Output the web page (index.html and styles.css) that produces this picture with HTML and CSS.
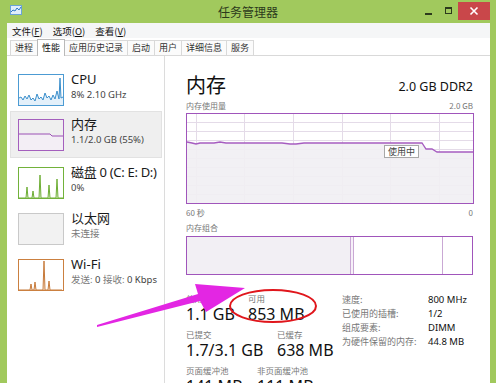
FILE: index.html
```html
<!DOCTYPE html>
<html lang="zh-CN">
<head>
<meta charset="utf-8">
<title>任务管理器</title>
<link rel="stylesheet" href="styles.css">
</head>
<body>
<div class="window">
  <div class="titlebar">
    <div class="tb-left">
      <svg class="app-icon" width="12" height="10" viewBox="0 0 12 10"><rect x="0.5" y="0.5" width="11" height="9" fill="#dfeefa" stroke="#6aa3d6"/><polyline points="1,7 3,5 5,6 7,3 9,5 11,2" fill="none" stroke="#2f78c4" stroke-width="1"/></svg>
    </div>
    <div class="title">任务管理器</div>
    <div class="tb-right">
      <svg class="caption-svg" width="72" height="18" viewBox="0 0 72 18">
        <rect x="7" y="11" width="7" height="2" fill="#2c3a1c"/>
        <rect x="27.5" y="5.5" width="6" height="6" fill="none" stroke="#2c3a1c"/>
        <rect x="27" y="5" width="7" height="2" fill="#2c3a1c"/>
        <rect x="40" y="0" width="32" height="18" fill="#c9474a"/>
        <path d="M52.5 5.5 L59.5 12.5 M59.5 5.5 L52.5 12.5" stroke="#ffffff" stroke-width="1.6"/>
      </svg>
    </div>
  </div>
  <div class="client">
    <div class="menubar">
      <span class="menu">文件(<u>F</u>)</span>
      <span class="menu">选项(<u>O</u>)</span>
      <span class="menu">查看(<u>V</u>)</span>
    </div>
    <div class="tabs">
      <span class="tab">进程</span>
      <span class="tab active">性能</span>
      <span class="tab">应用历史记录</span>
      <span class="tab">启动</span>
      <span class="tab">用户</span>
      <span class="tab">详细信息</span>
      <span class="tab">服务</span>
    </div>
    <div class="main">
      <div class="sidebar">
        <div class="item">
          <svg class="thumb" width="46" height="32" viewBox="0 0 46 32"><polygon points="1,31 1,24 3,23 5,26 7,22 9,25 11,21 13,26 15,24 17,27 19,20 21,25 23,23 25,26 27,19 29,24 31,22 33,26 35,21 37,25 39,17 41,25 42,4 43,24 45,23 45,31" fill="#e3f0fa"/><polyline points="1,24 3,23 5,26 7,22 9,25 11,21 13,26 15,24 17,27 19,20 21,25 23,23 25,26 27,19 29,24 31,22 33,26 35,21 37,25 39,17 41,25 42,4 43,24 45,23" fill="none" stroke="#3b8fcc" stroke-width="1"/><rect x="0.5" y="0.5" width="45" height="31" fill="none" stroke="#4c9bd3"/></svg>
          <div class="info"><div class="name">CPU</div><div class="sub">8% 2.10 GHz</div></div>
        </div>
        <div class="item selected">
          <svg class="thumb" width="46" height="32" viewBox="0 0 46 32"><polygon points="1,31 1,15 32,15 34,17 45,17 45,31" fill="#f3eef5"/><polyline points="1,15 32,15 34,17 45,17" fill="none" stroke="#9b50b5" stroke-width="1"/><rect x="0.5" y="0.5" width="45" height="31" fill="none" stroke="#a45fbd"/></svg>
          <div class="info"><div class="name">内存</div><div class="sub">1.1/2.0 GB (55%)</div></div>
        </div>
        <div class="item">
          <svg class="thumb" width="46" height="32" viewBox="0 0 46 32"><polyline points="1,31 8,31 9,20 10,31 14,31 15,24 16,31 21,31 22,8 23,31 30,31 31,18 32,31 38,31 39,12 40,31 45,31" fill="#e9f4de" stroke="#6eae35" stroke-width="1"/><rect x="0.5" y="0.5" width="45" height="31" fill="none" stroke="#72b23a"/></svg>
          <div class="info"><div class="name tight">磁盘 0 (C: E: D:)</div><div class="sub">0%</div></div>
        </div>
        <div class="item">
          <svg class="thumb" width="46" height="32" viewBox="0 0 46 32"><rect x="0.5" y="0.5" width="45" height="31" fill="#f2f2f2" stroke="#c9c9c9"/></svg>
          <div class="info"><div class="name">以太网</div><div class="sub muted">未连接</div></div>
        </div>
        <div class="item">
          <svg class="thumb" width="46" height="32" viewBox="0 0 46 32"><polyline points="1,31 12,31 13,25 14,31 16,31 17,23 18,31 25,31 26,2 27,31 30,31 31,22 32,31 44,31" fill="#fbefe4" stroke="#c77a3a" stroke-width="1"/><rect x="0.5" y="0.5" width="45" height="31" fill="none" stroke="#cb8040"/></svg>
          <div class="info"><div class="name">Wi-Fi</div><div class="sub"><span class="muted">发送:</span> 0 <span class="muted">接收:</span> 0 Kbps</div></div>
        </div>
      </div>
      <div class="detail">
        <div class="head">
          <div class="big-title">内存</div>
          <div class="spec">2.0 GB DDR2</div>
        </div>
        <div class="caption-row"><span>内存使用量</span><span>2.0 GB</span></div>
        <div class="usage">
          <svg class="usage-graph" width="288" height="91" viewBox="0 0 288 91">
            <g stroke="#e4dbe8" stroke-width="1">
              <line x1="0" y1="9.5" x2="288" y2="9.5"/><line x1="0" y1="18.5" x2="288" y2="18.5"/><line x1="0" y1="27.5" x2="288" y2="27.5"/><line x1="0" y1="36.5" x2="288" y2="36.5"/><line x1="0" y1="45.5" x2="288" y2="45.5"/><line x1="0" y1="54.5" x2="288" y2="54.5"/><line x1="0" y1="63.5" x2="288" y2="63.5"/><line x1="0" y1="72.5" x2="288" y2="72.5"/><line x1="0" y1="81.5" x2="288" y2="81.5"/>
              <line x1="10.5" y1="0" x2="10.5" y2="91"/><line x1="58.5" y1="0" x2="58.5" y2="91"/><line x1="107.5" y1="0" x2="107.5" y2="91"/><line x1="156.5" y1="0" x2="156.5" y2="91"/><line x1="204.5" y1="0" x2="204.5" y2="91"/><line x1="253.5" y1="0" x2="253.5" y2="91"/>
            </g>
            <polygon points="1,90 1,29 6,30 10,31 14,30 28,30 34,29 40,30 48,30 96,30 104,31 110,31 118,30 236,30 240,36 246,36 251,39 287,39 287,90" fill="#f1eef3" opacity="0.9"/>
            <polyline points="1,29 6,30 10,31 14,30 28,30 34,29 40,30 48,30 96,30 104,31 110,31 118,30 236,30 240,36 246,36 251,39 287,39" fill="none" stroke="#a65cc0" stroke-width="1.3"/>
            <rect x="0.5" y="0.5" width="287" height="90" fill="none" stroke="#a055bb"/>
          </svg>
          <span class="in-use-tag">使用中</span>
        </div>
        <div class="caption-row axis"><span>60 秒</span><span>0</span></div>
        <div class="caption-row combo-cap"><span>内存组合</span></div>
        <div class="combo">
          <div class="seg used"></div>
          <div class="seg modified"></div>
          <div class="seg standby"></div>
          <div class="seg free"></div>
        </div>
        <div class="stats">
          <div class="left-stats">
            <div class="row">
              <div class="stat w62"><div class="lbl">使用中</div><div class="val">1.1 GB</div></div>
              <div class="stat"><div class="lbl">可用</div><div class="val">853 MB</div></div>
            </div>
            <div class="row">
              <div class="stat w91"><div class="lbl">已提交</div><div class="val">1.7/3.1 GB</div></div>
              <div class="stat"><div class="lbl">已缓存</div><div class="val">638 MB</div></div>
            </div>
            <div class="row">
              <div class="stat w71"><div class="lbl">页面缓冲池</div><div class="val">141 MB</div></div>
              <div class="stat"><div class="lbl">非页面缓冲池</div><div class="val">111 MB</div></div>
            </div>
          </div>
          <div class="right-stats">
            <div class="kv"><span class="k">速度:</span><span class="v">800 MHz</span></div>
            <div class="kv"><span class="k">已使用的插槽:</span><span class="v">1/2</span></div>
            <div class="kv"><span class="k">组成要素:</span><span class="v">DIMM</span></div>
            <div class="kv"><span class="k">为硬件保留的内存:</span><span class="v">44.8 MB</span></div>
          </div>
        </div>
      </div>
    </div>
  </div>
  <svg class="annotations" width="496" height="383" viewBox="0 0 496 383">
    <polygon points="97,327 200,301 206,312 245,288 195,284 198,294 97,325" fill="#e326e3"/>
    <ellipse cx="273" cy="306" rx="43" ry="16" fill="none" stroke="#e0161c" stroke-width="2"/>
  </svg>
</div>
</body>
</html>
```
FILE: styles.css
```css
html, body {
  margin: 0;
  padding: 0;
}
body {
  font-family: "Noto Sans", "Noto Sans CJK SC", sans-serif;
  color: #222;
}
.window {
  position: relative;
  width: 496px;
  height: 383px;
  background: #a1c95d;
  display: flex;
  flex-direction: column;
  overflow: hidden;
}
.titlebar {
  height: 23px;
  display: grid;
  grid-template-columns: 170px 156px 170px;
  flex-shrink: 0;
}
.tb-left {
  padding: 5px 0 0 10px;
}
.app-icon { display: block; }
.title {
  text-align: center;
  font-family: "Noto Sans CJK SC", sans-serif;
  font-size: 12px;
  line-height: 23px;
  color: #2c3a1c;
}
.tb-right {
  display: flex;
  justify-content: flex-end;
  padding: 2px 6px 0 0;
}
.caption-svg { display: block; flex-shrink: 0; }
.client {
  flex: 1;
  margin: 0 6px 0 7px;
  background: #fff;
  display: flex;
  flex-direction: column;
  min-height: 0;
}
.menubar {
  height: 15px;
  background: #f5f6f7;
  display: flex;
  align-items: center;
  font-family: "Noto Sans CJK SC", sans-serif;
  font-size: 9.5px;
  color: #111;
  padding-left: 5px;
  flex-shrink: 0;
}
.menu { margin-right: 10px; }
.menu u { text-decoration: underline; }
.tabs {
  height: 16px;
  display: flex;
  align-items: flex-end;
  padding: 1px 0 0 3px;
  border-bottom: 1px solid #d9d9d9;
  flex-shrink: 0;
}
.tab {
  height: 14px;
  line-height: 14px;
  padding: 0 4px;
  border: 1px solid #d9d9d9;
  border-bottom: none;
  margin-right: -1px;
  font-family: "Noto Sans CJK SC", sans-serif;
  font-size: 9px;
  color: #333;
  background: #fbfbfb;
}
.tab.active {
  background: #fff;
  height: 16px;
  line-height: 16px;
  position: relative;
  top: 1px;
  z-index: 1;
  border-color: #b9b9b9;
  color: #111;
}
.main {
  flex: 1;
  display: flex;
  min-height: 0;
}
.sidebar {
  width: 154px;
  border-right: 1px solid #dcdcdc;
  padding: 9px 0 0 3px;
  flex-shrink: 0;
}
.item {
  height: 46px;
  box-sizing: border-box;
  display: flex;
  align-items: flex-start;
  padding: 8px 0 0 7px;
  border: 1px solid transparent;
  margin-right: 2px;
}
.item.selected {
  background: #efefef;
  border-color: #e2e2e2;
  height: 47px;
  padding-top: 7px;
}
.thumb { flex-shrink: 0; display: block; }
.info {
  margin-left: 7px;
  margin-top: -4px;
  white-space: nowrap;
}
.name {
  font-family: "Noto Sans", "Noto Sans CJK SC", sans-serif;
  font-size: 13px;
  line-height: 18px;
  color: #1a1a1a;
}
.name.tight { letter-spacing: -0.3px; }
.sub {
  font-family: "Noto Sans", "Noto Sans CJK SC", sans-serif;
  font-size: 9.5px;
  line-height: 13px;
  color: #444;
}
.muted { color: #7a7a7a; }
.detail {
  flex: 1;
  padding: 15px 17px 0 21px;
  min-width: 0;
}
.head {
  display: flex;
  justify-content: space-between;
  align-items: flex-end;
  height: 27px;
}
.big-title {
  font-family: "Noto Sans CJK SC", sans-serif;
  font-size: 20px;
  line-height: 27px;
  color: #111;
}
.spec {
  font-size: 12.5px;
  line-height: 18px;
  color: #111;
  margin-bottom: 2px;
}
.caption-row {
  display: flex;
  justify-content: space-between;
  font-family: "Noto Sans CJK SC", sans-serif;
  font-size: 8px;
  line-height: 12px;
  color: #777;
  margin-top: 2px;
}
.usage {
  position: relative;
  height: 91px;
  margin-top: 1px;
}
.usage-graph { display: block; }
.in-use-tag {
  position: absolute;
  left: 198px;
  top: 32px;
  font-family: "Noto Sans CJK SC", sans-serif;
  font-size: 9px;
  line-height: 11px;
  padding: 0 3px;
  background: #fff;
  border: 1px solid #a8a8a8;
  color: #444;
}
.caption-row.axis { margin-top: 3px; }
.caption-row.combo-cap { margin-top: 3px; }
.combo {
  display: flex;
  height: 37px;
  border: 1px solid #a055bb;
  margin-top: 2px;
}
.seg { height: 100%; }
.seg.used { width: 163px; background: #f2eff4; border-right: 1px solid #c9a8d4; }
.seg.modified { width: 2px; background: #f6f0f8; border-right: 1px solid #c9a8d4; }
.seg.standby { width: 88px; border-right: 1px solid #c9a8d4; }
.seg.free { flex: 1; }
.stats {
  display: flex;
  margin-top: 18px;
}
.left-stats { width: 156px; }
.row { display: flex; margin-bottom: 5px; }
.stat.w62 { width: 62px; }
.stat.w91 { width: 91px; }
.stat.w71 { width: 71px; }
.lbl {
  font-family: "Noto Sans CJK SC", sans-serif;
  font-size: 8.5px;
  line-height: 11px;
  color: #777;
}
.val {
  font-size: 16px;
  line-height: 20px;
  color: #111;
}
.kv {
  display: flex;
  font-size: 9px;
  line-height: 14px;
}
.k {
  width: 86px;
  font-family: "Noto Sans CJK SC", sans-serif;
  color: #777;
}
.v { color: #111; font-size: 9.5px; }
.annotations {
  position: absolute;
  left: 0;
  top: 0;
  pointer-events: none;
}
```
